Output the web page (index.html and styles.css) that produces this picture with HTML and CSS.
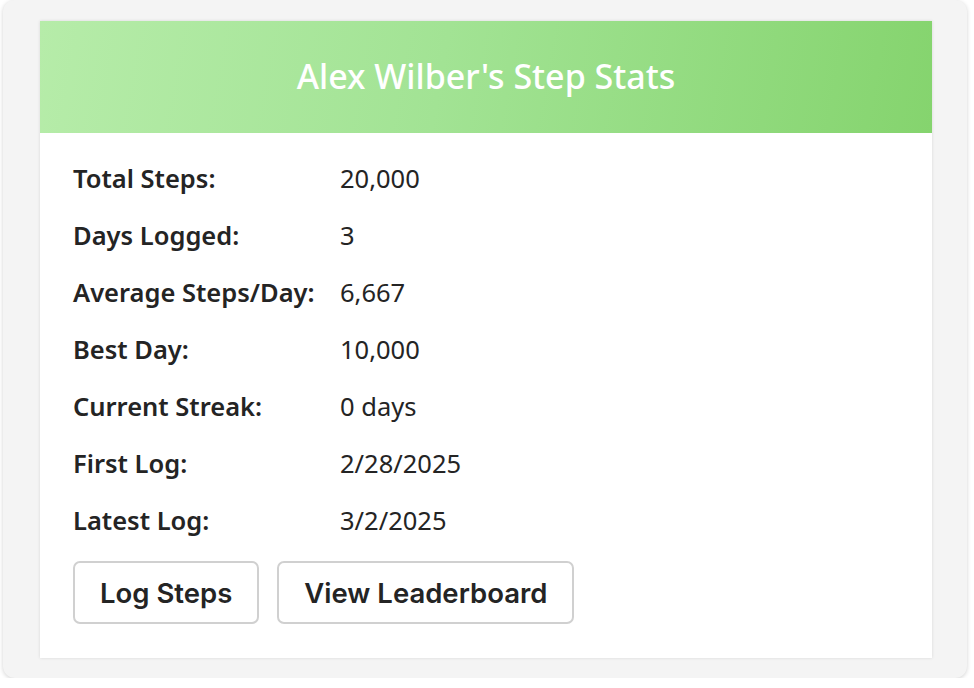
FILE: index.html
```html
<!DOCTYPE html>
<html>
<head>
<meta charset="utf-8">
<link rel="stylesheet" href="styles.css">
</head>
<body>
<div class="frame">
  <div class="card">
    <div class="card-header">Alex Wilber's Step Stats</div>
    <div class="card-body">
      <div class="stats">
        <div class="label">Total Steps:</div><div class="value">20,000</div>
        <div class="label">Days Logged:</div><div class="value">3</div>
        <div class="label">Average Steps/Day:</div><div class="value">6,667</div>
        <div class="label">Best Day:</div><div class="value">10,000</div>
        <div class="label">Current Streak:</div><div class="value">0 days</div>
        <div class="label">First Log:</div><div class="value">2/28/2025</div>
        <div class="label">Latest Log:</div><div class="value">3/2/2025</div>
      </div>
      <div class="actions">
        <button class="btn">Log Steps</button>
        <button class="btn">View Leaderboard</button>
      </div>
    </div>
  </div>
</div>
</body>
</html>
```
FILE: styles.css
```css
html, body {
  margin: 0;
  padding: 0;
  background: #ffffff;
}
body {
  padding: 0 7px 0 3px;
  font-family: "Noto Sans", "Open Sans", sans-serif;
  color: #242424;
}
.frame {
  box-sizing: border-box;
  height: 678px;
  background: #f4f4f4;
  border-radius: 12px;
  box-shadow: 0 1px 4px rgba(0, 0, 0, 0.18);
  padding: 21px 35px 20px 37px;
}
.card {
  background: #ffffff;
  box-shadow: 0 0 3px rgba(0, 0, 0, 0.12);
  height: 637px;
  display: flex;
  flex-direction: column;
}
.card-header {
  height: 112px;
  flex: none;
  display: flex;
  align-items: center;
  justify-content: center;
  background: linear-gradient(100deg, #b6eca9 0%, #a2e394 45%, #85d46e 100%);
  color: #ffffff;
  font-size: 34px;
  font-weight: 500;
  padding-bottom: 2px;
  box-sizing: border-box;
}
.card-body {
  padding: 16px 33px 0 33px;
}
.stats {
  display: grid;
  grid-template-columns: 267px 1fr;
  grid-auto-rows: 57px;
  align-items: center;
  font-size: 25.5px;
}
.label {
  font-weight: 600;
}
.value {
  font-weight: 400;
}
.actions {
  display: flex;
  gap: 18px;
  margin-top: 13px;
}
.btn {
  box-sizing: border-box;
  height: 63px;
  padding: 0 25px;
  background: #ffffff;
  border: 2px solid #d0d0d0;
  border-radius: 7px;
  font-family: Inter, "Noto Sans", sans-serif;
  font-size: 27.5px;
  font-weight: 600;
  color: #242424;
}
```
